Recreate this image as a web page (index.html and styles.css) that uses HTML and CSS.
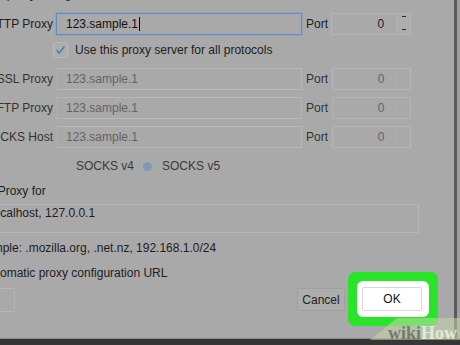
FILE: index.html
```html
<!DOCTYPE html>
<html lang="en">
<head>
  <meta charset="UTF-8">
  <meta name="viewport" content="width=device-width, initial-scale=1.0">
  <title>Connection Settings</title>
  <link rel="stylesheet" href="styles.css">
</head>
<body>
  <div class="window">
    <div class="pane">
      <div class="content">
        <div class="cut-line">Manual proxy configuration:</div>

        <div class="row row-http">
          <span class="lbl">HTTP Proxy</span>
          <div class="field focus">123.sample.1<span class="caret"></span></div>
          <span class="port-lbl">Port</span>
          <div class="port"><span class="num">0</span><span class="spin"><i></i><i></i></span></div>
        </div>

        <div class="check-row">
          <span class="check">
            <svg width="11" height="10" viewBox="0 0 11 10"><path d="M1.5 5.2 L4.2 8 L9.5 1.5" fill="none" stroke="#4f7db8" stroke-width="1.6"/></svg>
          </span>
          <span>Use this proxy server for all protocols</span>
        </div>

        <div class="row row-ssl off">
          <span class="lbl">SSL Proxy</span>
          <div class="field">123.sample.1</div>
          <span class="port-lbl">Port</span>
          <div class="port"><span class="num">0</span><span class="spin"></span></div>
        </div>

        <div class="row off">
          <span class="lbl">FTP Proxy</span>
          <div class="field">123.sample.1</div>
          <span class="port-lbl">Port</span>
          <div class="port"><span class="num">0</span><span class="spin"></span></div>
        </div>

        <div class="row off">
          <span class="lbl">SOCKS Host</span>
          <div class="field">123.sample.1</div>
          <span class="port-lbl">Port</span>
          <div class="port"><span class="num">0</span><span class="spin"></span></div>
        </div>

        <div class="socks-row">
          <span>SOCKS v4</span>
          <span class="radio"></span>
          <span>SOCKS v5</span>
        </div>

        <div class="no-proxy">No Proxy for</div>
        <div class="textbox">localhost, 127.0.0.1</div>
        <div class="example">Example: .mozilla.org, .net.nz, 192.168.1.0/24</div>
        <div class="auto">Automatic proxy configuration URL</div>

        <div class="buttons">
          <span class="btn help"></span>
          <span class="btn cancel">Cancel</span>
          <span class="btn ok">OK</span>
        </div>
      </div>
    </div>
    <div class="edge"></div>
    <div class="outside"></div>
  </div>
  <div class="taskbar"></div>

  <div class="wm-band"></div>
  <div class="wm"><span class="wm-wiki">wiki</span><span class="wm-how">How</span></div>
</body>
</html>
```

FILE: styles.css
```css
* {
  margin: 0;
  padding: 0;
  box-sizing: border-box;
}
body {
  position: relative;
  width: 460px;
  height: 345px;
  overflow: hidden;
  background: #363636;
  font-family: "Liberation Sans", Arial, sans-serif;
  font-size: 12px;
  color: #1d1d1d;
}
.window {
  display: flex;
  height: 338px;
}
.pane {
  width: 454px;
  background: #a9a9a9;
  overflow: hidden;
}
.edge {
  width: 3px;
  background: #5a5a5a;
}
.outside {
  flex: 1;
  background: #9e9e9e;
}
.taskbar {
  height: 7px;
  background: #363636;
  border-top: 1px solid #8a8a8a;
}
.content {
  margin-left: -30px;
}
.cut-line {
  margin-top: -13px;
  margin-left: -6px;
  height: 14px;
  line-height: 14px;
}

/* proxy rows */
.row {
  display: flex;
  align-items: center;
  height: 22px;
  margin-top: 7px;
}
.row-http {
  margin-top: 12px;
}
.row-ssl {
  margin-top: 10px;
}
.lbl {
  width: 83px;
  text-align: right;
}
.field {
  margin-left: 3px;
  width: 246px;
  height: 22px;
  padding-left: 9px;
  line-height: 20px;
  border: 1px solid #b7b7b7;
  border-left-color: #b0b0b0;
}
.field.focus {
  border-color: #5d8dc8;
  box-shadow: 0 0 0 1px rgba(110, 150, 200, 0.35);
  color: #111;
}
.caret {
  display: inline-block;
  width: 1px;
  height: 14px;
  margin-left: 1px;
  background: #000;
  vertical-align: -3px;
}
.port-lbl {
  margin-left: 4px;
  width: 25px;
}
.port {
  display: flex;
  width: 80px;
  height: 22px;
  border: 1px solid #b5b5b5;
}
.num {
  width: 53px;
  text-align: right;
  line-height: 20px;
}
.spin {
  display: flex;
  flex-direction: column;
  justify-content: space-between;
  align-items: center;
  width: 14px;
  margin-left: 12px;
  padding: 2px 0 4px;
  border-left: 1px solid #b2b2b2;
  background: #adadad;
}
.spin i {
  width: 4px;
  height: 1px;
  background: #2a2a2a;
}
.off .lbl,
.off .port-lbl {
  color: #333;
}
.off .field,
.off .num {
  color: #636363;
}
.off .port {
  margin-left: 1px;
  width: 79px;
}
.off .spin {
  background: none;
  border-left-color: #adadad;
}

/* checkbox */
.check-row {
  display: flex;
  align-items: center;
  height: 16px;
  margin-top: 7px;
  margin-left: 83px;
}
.check {
  display: flex;
  align-items: center;
  justify-content: center;
  width: 15px;
  height: 16px;
  margin-right: 7px;
  border: 1px solid #b9b9b9;
  border-radius: 3px;
  background: #adadad;
}

/* socks version */
.socks-row {
  display: flex;
  align-items: center;
  height: 16px;
  margin-top: 10px;
  margin-left: 106px;
  color: #3a3a3a;
}
.radio {
  width: 9px;
  height: 9px;
  margin: 0 10px 0 9px;
  border-radius: 50%;
  background: #8398ae;
  box-shadow: 0 0 0 1px #a0adba;
}

/* exceptions */
.no-proxy {
  height: 16px;
  line-height: 16px;
  margin-top: 9px;
  margin-left: 9px;
}
.textbox {
  width: 433px;
  height: 29px;
  margin-top: 5px;
  margin-left: 16px;
  padding-left: 4px;
  line-height: 16px;
  border: 1px solid #b7b7b7;
}
.example {
  height: 16px;
  line-height: 16px;
  margin-top: 7px;
  margin-left: 2px;
}
.auto {
  height: 16px;
  line-height: 16px;
  margin-top: 9px;
  margin-left: 12px;
}

/* buttons */
.buttons {
  display: flex;
  align-items: flex-start;
  margin-top: 7px;
}
.btn {
  display: block;
  height: 24px;
  line-height: 22px;
  text-align: center;
  border: 1px solid #9f9f9f;
  border-radius: 2px;
}
.help {
  width: 45px;
  border-color: #b5b5b5;
}
.cancel {
  width: 48px;
  height: 23px;
  margin-left: 282px;
  background: #adadad;
  color: #222;
}
.ok {
  width: 60px;
  margin-top: -1px;
  margin-left: 17px;
  background: #fff;
  border-color: #d9d9d9;
  color: #111;
  box-shadow: 1px 0 0 6px #fff, 1px 0 0 15px #2ae42a;
}

/* watermark */
.wm-band {
  position: absolute;
  right: 0;
  bottom: 5px;
  width: 90px;
  height: 22px;
  background: rgba(195, 215, 170, 0.55);
  clip-path: polygon(30% 0, 100% 0, 100% 100%, 0 100%);
}
.wm {
  position: absolute;
  right: 3px;
  bottom: 3px;
  font-family: "Liberation Serif", serif;
  font-weight: bold;
  font-size: 18px;
  line-height: 18px;
}
.wm-wiki {
  color: #727c68;
}
.wm-how {
  color: #e4e9dc;
}
```
